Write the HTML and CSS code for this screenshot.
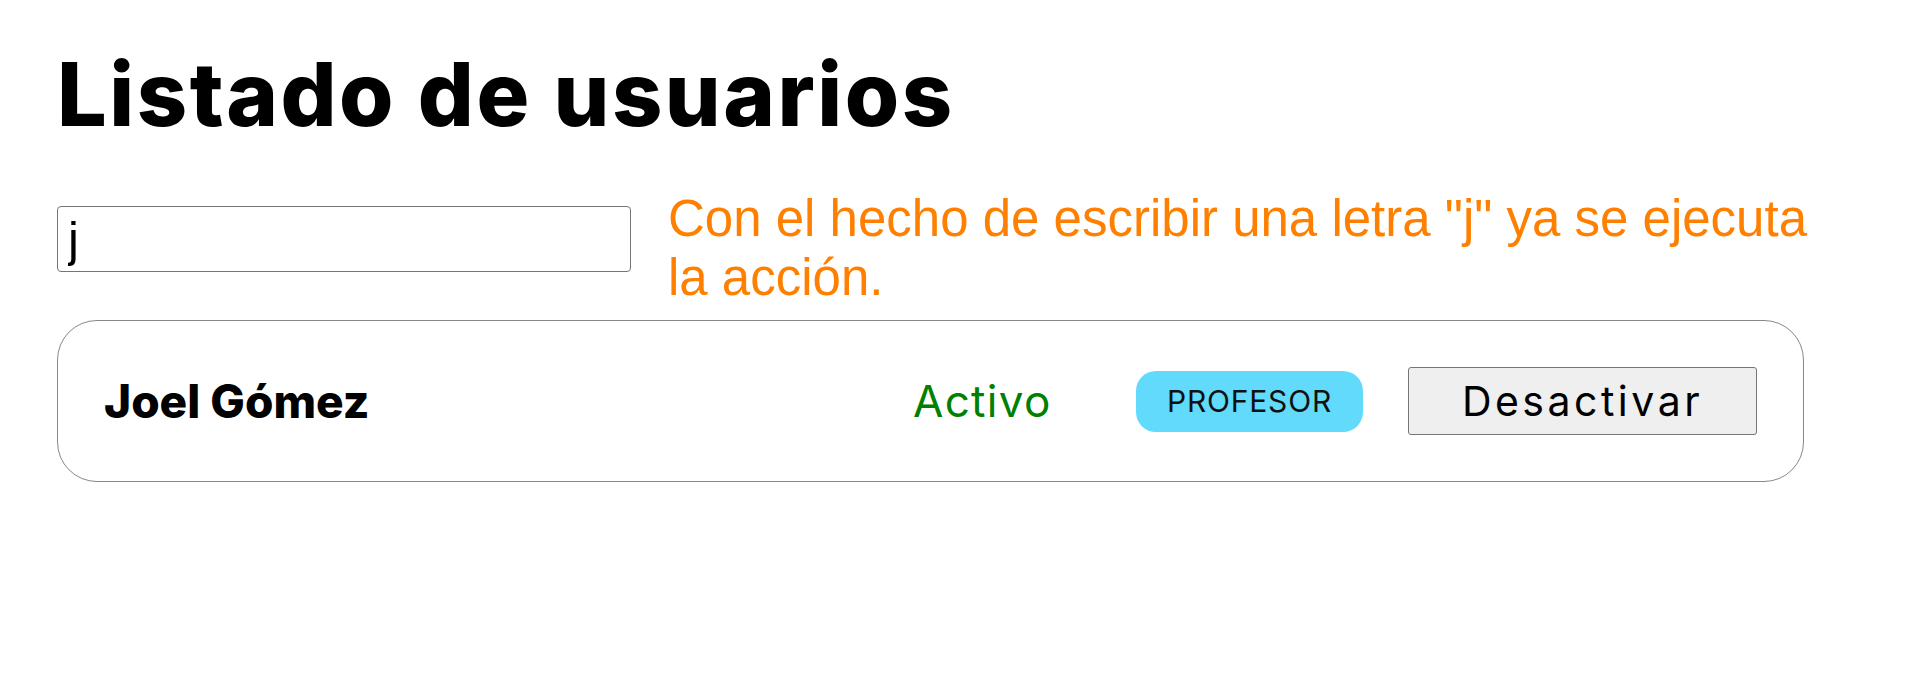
FILE: index.html
```html
<!DOCTYPE html>
<html lang="es">
<head>
<meta charset="utf-8">
<title>Listado de usuarios</title>
<link rel="stylesheet" href="styles.css">
</head>
<body>
<main class="page">
  <h1 class="title">Listado de usuarios</h1>
  <div class="search-row">
    <input class="search" type="text" value="j">
    <p class="hint">Con el hecho de escribir una letra "j" ya se ejecuta la acción.</p>
  </div>
  <ul class="user-list">
    <li class="user-card">
      <span class="user-name">Joel Gómez</span>
      <span class="user-status">Activo</span>
      <span class="user-role">PROFESOR</span>
      <button class="user-action" type="button">Desactivar</button>
    </li>
  </ul>
</main>
</body>
</html>
```
FILE: styles.css
```css
html, body {
  margin: 0;
  padding: 0;
  background: #ffffff;
}

.page {
  box-sizing: border-box;
  padding: 41px 0 0 57px;
  width: 1804px;
  font-family: Inter, "Noto Sans", sans-serif;
  color: #000;
}

.title {
  margin: 0 0 43px 0;
  font-family: Inter, "Noto Sans", sans-serif;
  font-weight: 800;
  font-size: 88px;
  line-height: 106px;
  letter-spacing: 2.5px;
}

.search-row {
  display: flex;
  align-items: flex-start;
  gap: 37px;
}

.search {
  flex: none;
  box-sizing: border-box;
  width: 574px;
  height: 66px;
  margin: 16px 0 0 0;
  padding: 0 10px;
  border: 1px solid #767676;
  border-radius: 4px;
  font-family: "Liberation Sans", Arial, sans-serif;
  font-size: 49px;
  color: #000;
  background: #fff;
  outline: none;
}

.hint {
  flex: none;
  width: 1160px;
  margin: 0;
  font-family: "Liberation Sans", Arial, sans-serif;
  font-size: 51px;
  line-height: 58.6px;
  color: #ff8000;
}

.user-list {
  list-style: none;
  margin: 13px 0 0 0;
  padding: 0;
}

.user-card {
  box-sizing: border-box;
  display: flex;
  align-items: center;
  width: 1747px;
  height: 162px;
  padding: 0 46px 0 46px;
  border: 1px solid #888888;
  border-radius: 40px;
}

.user-name {
  flex: 1;
  font-weight: 800;
  font-size: 46px;
  letter-spacing: 0px;
}

.user-status {
  flex: none;
  width: 223px;
  font-size: 44px;
  letter-spacing: 1.3px;
  color: #008000;
}

.user-role {
  flex: none;
  box-sizing: border-box;
  display: flex;
  align-items: center;
  justify-content: center;
  width: 227px;
  height: 61px;
  margin-right: 45px;
  border-radius: 20px;
  background: #61dafb;
  font-size: 30px;
  letter-spacing: 0.8px;
  color: #111;
}

.user-action {
  flex: none;
  box-sizing: border-box;
  width: 349px;
  height: 68px;
  padding: 0;
  border: 1px solid #767676;
  border-radius: 3px;
  background: #efefef;
  font-family: Inter, "Noto Sans", sans-serif;
  font-size: 41px;
  letter-spacing: 3.5px;
  color: #000;
}
```
